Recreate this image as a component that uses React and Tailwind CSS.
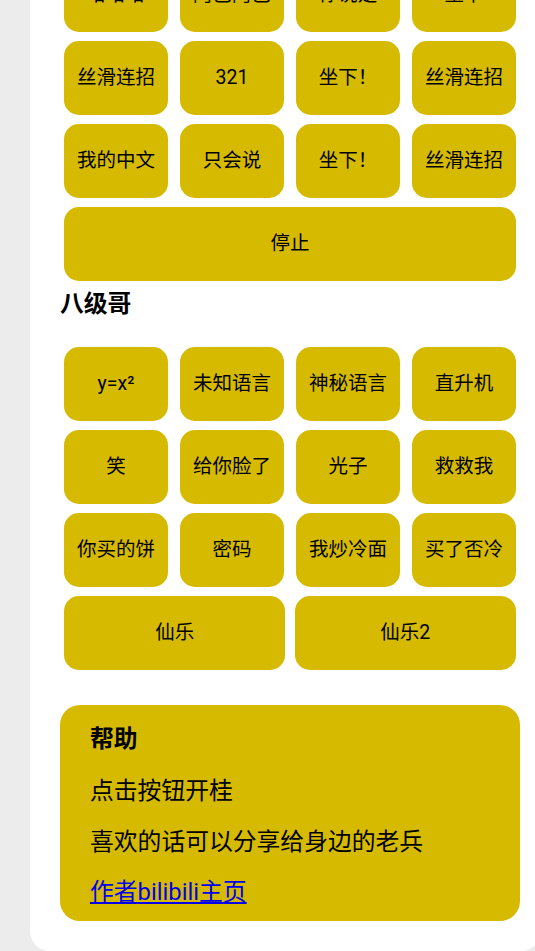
const topRows = [
  ["哈哈哈", "阿巴阿巴", "你说是", "坐下"],
  ["丝滑连招", "321", "坐下！", "丝滑连招"],
  ["我的中文", "只会说", "坐下！", "丝滑连招"],
];

const bajige = [
  "y=x²",
  "未知语言",
  "神秘语言",
  "直升机",
  "笑",
  "给你脸了",
  "光子",
  "救救我",
  "你买的饼",
  "密码",
  "我炒冷面",
  "买了否冷",
];

const SoundButton = ({ label, width = "w-[23%]" }) => {
  return (
    <button
      type="button"
      className={`${width} h-[74px] mb-[2%] flex items-center justify-center rounded-[15px] bg-[#d5ba00] text-[19.5px] text-black leading-none`}
    >
      {label}
    </button>
  );
};

export default function App() {
  return (
    <div
      className="min-h-screen overflow-hidden bg-[#ececec] pl-[30px]"
      style={{ fontFamily: 'Roboto, "Noto Sans CJK SC", sans-serif' }}
    >
      <div className="-mt-[42px] -mr-[6px] mb-[1px] rounded-b-[20px] bg-white pl-[30px] pr-[21px] pb-[30px]">
        <div className="flex flex-wrap justify-between px-[4px]">
          {topRows.flat().map((label, i) => (
            <SoundButton key={i} label={label} />
          ))}
          <SoundButton label="停止" width="w-full" />
        </div>

        <h3 className="mt-[1px] mb-[29px] text-[23.8px] font-bold leading-[27px] text-black">
          八级哥
        </h3>

        <div className="flex flex-wrap justify-between px-[4px]">
          {bajige.map((label, i) => (
            <SoundButton key={i} label={label} />
          ))}
          <SoundButton label="仙乐" width="w-[49%]" />
          <SoundButton label="仙乐2" width="w-[49%]" />
        </div>

        <div className="mt-[26px] rounded-[20px] bg-[#d5ba00] pl-[30px] pt-[21px] pb-[15px] text-[23.8px] leading-[27px] text-black">
          <h3 className="font-bold">帮助</h3>
          <p className="mt-[25px]">点击按钮开桂</p>
          <p className="mt-[24px]">喜欢的话可以分享给身边的老兵</p>
          <p className="mt-[23px]">
            <a href="#" className="text-[#0000ee] underline">
              作者bilibili主页
            </a>
          </p>
        </div>
      </div>
    </div>
  );
}
